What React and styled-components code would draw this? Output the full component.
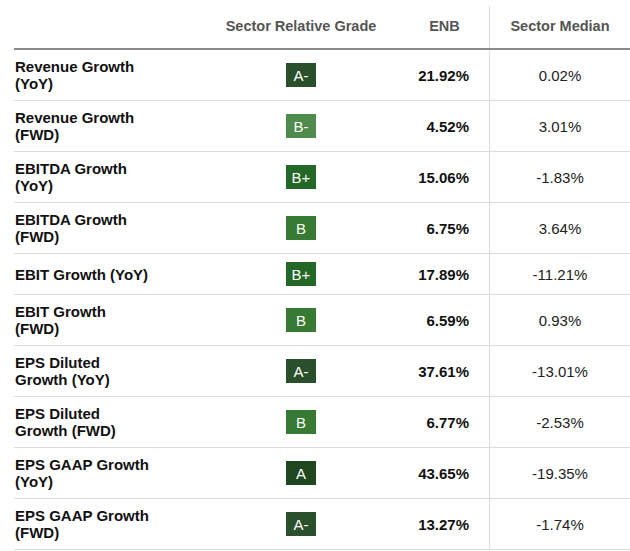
import React from "react";
import styled, { createGlobalStyle } from "styled-components";

const Global = createGlobalStyle`
  html, body { margin: 0; padding: 0; background: #fff; }
  body { font-family: "Liberation Sans", Arial, sans-serif; }
`;

const Wrap = styled.div`
  padding: 6px 0 0 14px;
  width: 616px;
`;

const Row = styled.div`
  display: grid;
  grid-template-columns: 188px 198px 89px 141px;
  align-items: stretch;
  border-bottom: ${(p) => (p.$head ? "2px solid #8a8a8a" : "1px solid #dcdcdc")};
`;

const Cell = styled.div`
  display: flex;
  align-items: center;
  justify-content: ${(p) => p.$justify || "center"};
  padding: ${(p) => p.$pad || "8px 0"};
  font-size: 15px;
  line-height: 17px;
  color: ${(p) => p.$color || "#222"};
  font-weight: ${(p) => (p.$bold ? 700 : 400)};
  border-left: ${(p) => (p.$divider ? "1px solid #dcdcdc" : "none")};
`;

const HeadCell = styled(Cell)`
  padding: 11px 0 13px;
  line-height: 18px;
  font-size: 14.5px;
  color: #555;
  font-weight: 700;
`;

const Label = styled(Cell)`
  justify-content: flex-start;
  padding: 8px 50px 8px 1px;
  font-weight: 700;
  color: #111;
`;

const gradeColors = {
  A: "#1e4720",
  "A-": "#2a4f2b",
  "B+": "#246827",
  B: "#367a34",
  "B-": "#4f8b4c",
};

const Badge = styled.span`
  display: inline-flex;
  align-items: center;
  justify-content: center;
  width: 30px;
  height: 24px;
  background: ${(p) => gradeColors[p.$grade]};
  color: #fff;
  font-size: 15px;
  font-family: "Liberation Sans", Arial, sans-serif;
`;

const rows = [
  ["Revenue Growth (YoY)", "A-", "21.92%", "0.02%"],
  ["Revenue Growth (FWD)", "B-", "4.52%", "3.01%"],
  ["EBITDA Growth (YoY)", "B+", "15.06%", "-1.83%"],
  ["EBITDA Growth (FWD)", "B", "6.75%", "3.64%"],
  ["EBIT Growth (YoY)", "B+", "17.89%", "-11.21%"],
  ["EBIT Growth (FWD)", "B", "6.59%", "0.93%"],
  ["EPS Diluted Growth (YoY)", "A-", "37.61%", "-13.01%"],
  ["EPS Diluted Growth (FWD)", "B", "6.77%", "-2.53%"],
  ["EPS GAAP Growth (YoY)", "A", "43.65%", "-19.35%"],
  ["EPS GAAP Growth (FWD)", "A-", "13.27%", "-1.74%"],
];

export default function App() {
  return (
    <>
      <Global />
      <Wrap>
        <Row $head>
          <HeadCell />
          <HeadCell>Sector Relative Grade</HeadCell>
          <HeadCell>ENB</HeadCell>
          <HeadCell $divider>Sector Median</HeadCell>
        </Row>
        {rows.map(([label, grade, val, med]) => (
          <Row key={label}>
            <Label>{label}</Label>
            <Cell>
              <Badge $grade={grade}>{grade}</Badge>
            </Cell>
            <Cell $justify="flex-end" $pad="8px 20px 8px 0" $bold $color="#111">
              {val}
            </Cell>
            <Cell $divider>{med}</Cell>
          </Row>
        ))}
      </Wrap>
    </>
  );
}
